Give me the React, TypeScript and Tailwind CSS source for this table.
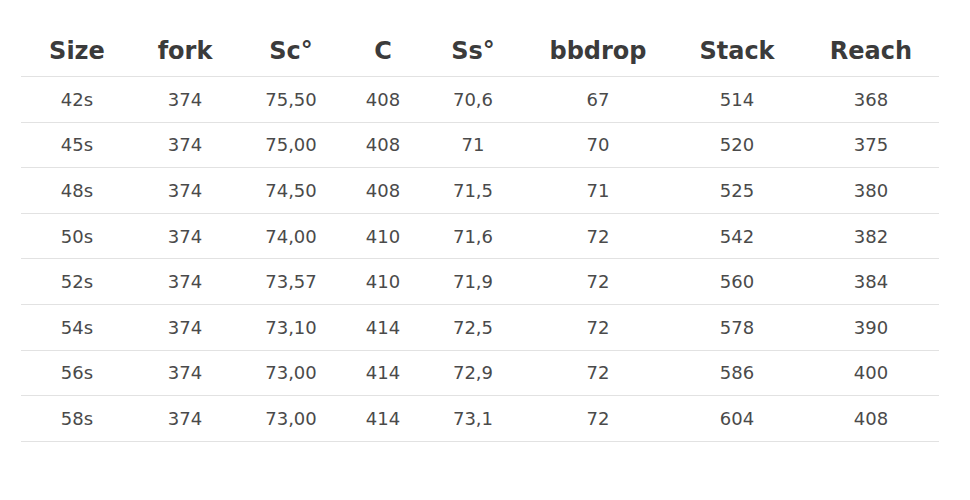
import React from 'react';

const headers = ['Size', 'fork', 'Sc°', 'C', 'Ss°', 'bbdrop', 'Stack', 'Reach'];

const rows = [
  ['42s', '374', '75,50', '408', '70,6', '67', '514', '368'],
  ['45s', '374', '75,00', '408', '71', '70', '520', '375'],
  ['48s', '374', '74,50', '408', '71,5', '71', '525', '380'],
  ['50s', '374', '74,00', '410', '71,6', '72', '542', '382'],
  ['52s', '374', '73,57', '410', '71,9', '72', '560', '384'],
  ['54s', '374', '73,10', '414', '72,5', '72', '578', '390'],
  ['56s', '374', '73,00', '414', '72,9', '72', '586', '400'],
  ['58s', '374', '73,00', '414', '73,1', '72', '604', '408']
];

const cols = 'grid grid-cols-[112px_104px_108px_76px_104px_146px_132px_136px]';

export default function App() {
  return (
    <div className="min-h-[500px] w-[970px] bg-white pt-[26px] pl-[21px] font-['DejaVu_Sans',Verdana,sans-serif]">
      <div className="w-[918px]">
        <div className={`${cols} h-[51px] items-center border-b border-[#e2e2e2] text-[24px] font-bold text-[#3b3b3b]`}>
          {headers.map((h) => (
            <div key={h} className="text-center">{h}</div>
          ))}
        </div>
        {rows.map((row, i) => (
          <div key={i} className={`${cols} h-[45.6px] items-center border-b border-[#e2e2e2] text-[18px] text-[#4a4a4a]`}>
            {row.map((cell, j) => (
              <div key={j} className="text-center">{cell}</div>
            ))}
          </div>
        ))}
      </div>
    </div>
  );
}
